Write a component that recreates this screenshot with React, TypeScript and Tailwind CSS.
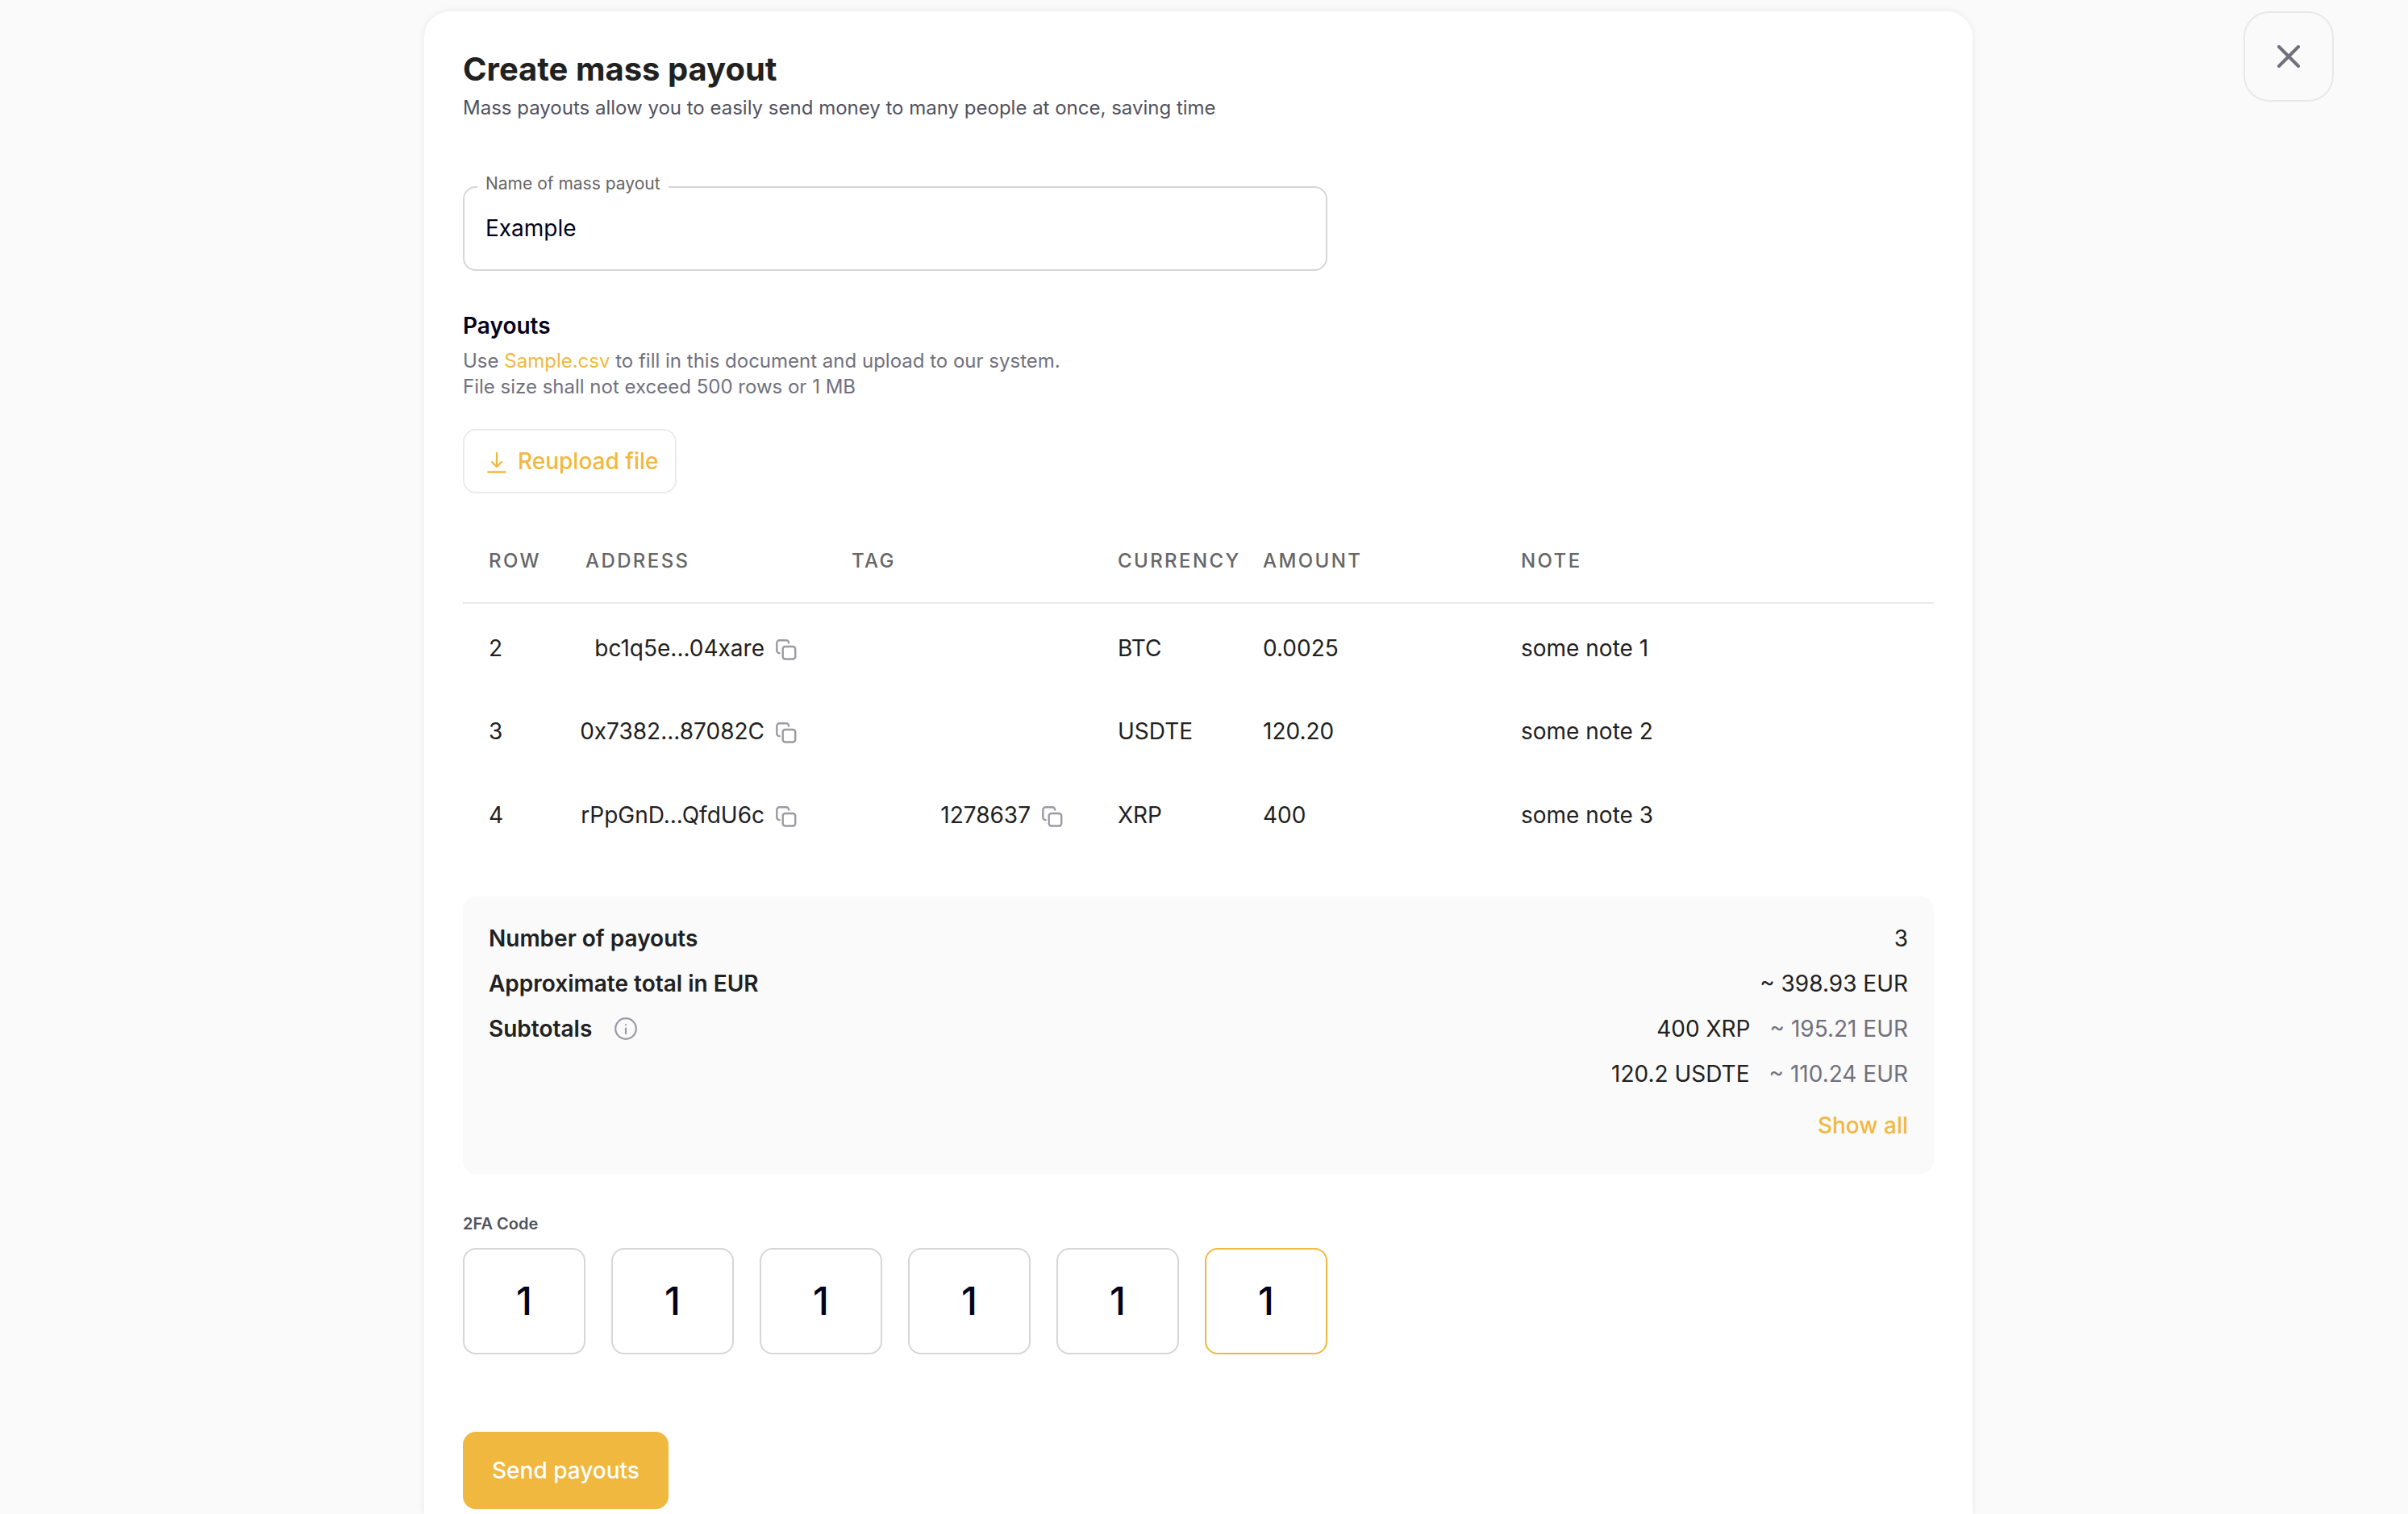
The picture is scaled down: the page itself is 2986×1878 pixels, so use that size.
import React, { useState } from 'react';

const payouts = [
  { row: 2, address: 'bc1q5e...04xare', tag: '', currency: 'BTC', amount: '0.0025', note: 'some note 1' },
  { row: 3, address: '0x7382...87082C', tag: '', currency: 'USDTE', amount: '120.20', note: 'some note 2' },
  { row: 4, address: 'rPpGnD...QfdU6c', tag: '1278637', currency: 'XRP', amount: '400', note: 'some note 3' },
];

const subtotals = [
  { amount: '400 XRP', eur: '~ 195.21 EUR' },
  { amount: '120.2 USDTE', eur: '~ 110.24 EUR' },
];

const CopyIcon = () => (
  <svg viewBox="0 0 26 26" className="h-[26px] w-[26px]" fill="none" stroke="#9a9aa3" strokeWidth="2.4" strokeLinecap="round">
    <rect x="8.7" y="9" width="15.5" height="15.5" rx="3" />
    <path d="M4.5 17.2a3.2 3.2 0 0 1-3.2-3.2V4.5a3.2 3.2 0 0 1 3.2-3.2H13a3.2 3.2 0 0 1 3.2 3.2" />
  </svg>
);

const DownloadIcon = () => (
  <svg viewBox="0 0 24 30" className="h-[30px] w-6" fill="none" stroke="currentColor" strokeWidth="2.3" strokeLinecap="round" strokeLinejoin="round">
    <path d="M12 5v17M6 16l6 6 6-6M1.2 28.5h21.6" />
  </svg>
);

const InfoIcon = () => (
  <svg viewBox="0 0 28 28" className="h-7 w-7" fill="none" stroke="#9a9aa3" strokeWidth="2.2" strokeLinecap="round">
    <circle cx="14" cy="14" r="12.8" />
    <path d="M14 13.5v6.5M14 9v0.1" />
  </svg>
);

const CopyValue = ({ value, label }: { value: string; label: string }) => (
  <div className="flex items-center justify-end gap-3.5">
    <span>{value}</span>
    <button type="button" aria-label={label} className="pt-1">
      <CopyIcon />
    </button>
  </div>
);

const App = () => {
  const [name, setName] = useState('Example');
  const [code, setCode] = useState(['1', '1', '1', '1', '1', '1']);

  const updateDigit = (index: number, value: string) => {
    setCode(code.map((digit, i) => (i === index ? value.slice(-1) : digit)));
  };

  return (
    <div className="relative min-h-screen bg-[#fafafa] pl-4 pr-[30px] pt-3.5 font-['Inter',sans-serif] text-[28px] leading-10 text-[#212121]">
      {/* === CLOSE === */}
      <button
        type="button"
        aria-label="Close"
        className="absolute right-[92px] top-3.5 flex h-28 w-28 items-center justify-center rounded-[32px] border-2 border-[#e8e8e8]"
      >
        <svg viewBox="0 0 28 28" className="h-7 w-7" stroke="#71717d" strokeWidth="4" strokeLinecap="round">
          <path d="M2 2l24 24M26 2L2 26" />
        </svg>
      </button>

      <main className="mx-auto max-w-[1920px] rounded-t-[32px] bg-white px-12 pb-1.5 pt-12 shadow-[0_0_8px_rgba(0,0,0,0.08)]">
        <h1 className="text-[40px] font-bold leading-12">Create mass payout</h1>
        <p className="text-2xl leading-12 text-[#52525e]">
          Mass payouts allow you to easily send money to many people at once, saving time
        </p>

        {/* === NAME === */}
        <fieldset className="mt-[58px] max-w-[1072px] rounded-2xl border-2 border-[#d6d6d6] px-4">
          <legend className="px-2.5 pb-2 text-[21px] leading-6 text-[#666666]">
            <label htmlFor="payout-name">Name of mass payout</label>
          </legend>
          <input
            id="payout-name"
            type="text"
            className="block h-[86px] w-full px-2.5 pb-4 text-[#02021a] outline-none"
            value={name}
            onChange={(e) => setName(e.target.value)}
          />
        </fieldset>

        {/* === UPLOAD === */}
        <h2 className="mt-12 font-semibold text-[#02021a]">Payouts</h2>
        <p className="mt-2 text-2xl leading-8 text-[#71717d]">
          Use <a href="#sample" className="text-[#f1b840]">Sample.csv</a> to fill in this document and upload to our system.
          <br />
          File size shall not exceed 500 rows or 1 MB
        </p>
        <button
          type="button"
          className="mt-9 flex h-20 items-center gap-3.5 rounded-2xl border-2 border-[#ebebeb] pl-7 pr-5 font-medium text-[#f1b840]"
        >
          <DownloadIcon />
          Reupload file
        </button>

        {/* === PAYOUTS TABLE === */}
        <table className="mt-8 w-full table-fixed text-left">
          <colgroup>
            <col className="w-[120px]" />
            <col className="w-[330px]" />
            <col className="w-[330px]" />
            <col className="w-[180px]" />
            <col className="w-[320px]" />
            <col />
          </colgroup>
          <thead>
            <tr className="h-[104px] border-b-2 border-[#ebebeb] text-2xl uppercase tracking-widest text-[#666666]">
              <th className="pl-8 font-medium">Row</th>
              <th className="pl-8 font-medium">Address</th>
              <th className="pl-8 font-medium">Tag</th>
              <th className="pl-8 font-medium">Currency</th>
              <th className="pl-8 font-medium">Amount</th>
              <th className="pl-8 font-medium">Note</th>
            </tr>
          </thead>
          <tbody>
            {payouts.map((item) => (
              <tr key={item.row} className="h-[104px]">
                <td className="pl-8 pt-1.5">{item.row}</td>
                <td className="pr-9 pt-1.5">
                  <CopyValue value={item.address} label="Copy address" />
                </td>
                <td className="pr-9 pt-1.5">{item.tag && <CopyValue value={item.tag} label="Copy tag" />}</td>
                <td className="pl-8 pt-1.5">{item.currency}</td>
                <td className="pl-8 pt-1.5">{item.amount}</td>
                <td className="pl-8 pt-1.5">{item.note}</td>
              </tr>
            ))}
          </tbody>
        </table>

        {/* === SUMMARY === */}
        <section className="mt-13 flex flex-col gap-4 rounded-2xl bg-[#fafafa] px-8 pb-10 pt-8">
          <div className="flex justify-between">
            <span className="font-semibold">Number of payouts</span>
            <span>3</span>
          </div>
          <div className="flex justify-between">
            <span className="font-semibold">Approximate total in EUR</span>
            <span>~ 398.93 EUR</span>
          </div>
          <div className="flex items-start justify-between">
            <div className="flex items-center gap-7">
              <span className="font-semibold">Subtotals</span>
              <button type="button" aria-label="About subtotals">
                <InfoIcon />
              </button>
            </div>
            <div className="flex flex-col items-end gap-4">
              {subtotals.map((item) => (
                <div key={item.amount} className="flex gap-6">
                  <span>{item.amount}</span>
                  <span className="text-[#71717d]">{item.eur}</span>
                </div>
              ))}
              <button type="button" className="mt-2 font-medium text-[#f1b840]">Show all</button>
            </div>
          </div>
        </section>

        {/* === 2FA === */}
        <fieldset className="mt-12">
          <legend className="text-xl font-semibold leading-7 text-[#52525e]">2FA Code</legend>
          <div className="mt-4 flex gap-8">
            {code.map((digit, index) => (
              <input
                key={index}
                type="text"
                inputMode="numeric"
                aria-label={`Digit ${index + 1}`}
                className={`h-[132px] w-[152px] rounded-2xl border-2 pb-0.5 text-center text-5xl font-medium text-[#02021a] outline-none ${
                  index === code.length - 1 ? 'border-[#f1b840]' : 'border-[#d6d6d6]'
                }`}
                value={digit}
                onChange={(e) => updateDigit(index, e.target.value)}
              />
            ))}
          </div>
        </fieldset>

        <button type="button" className="mt-24 h-24 rounded-2xl bg-[#f1b840] px-9 font-medium text-white">
          Send payouts
        </button>
      </main>
    </div>
  );
};

export default App;
